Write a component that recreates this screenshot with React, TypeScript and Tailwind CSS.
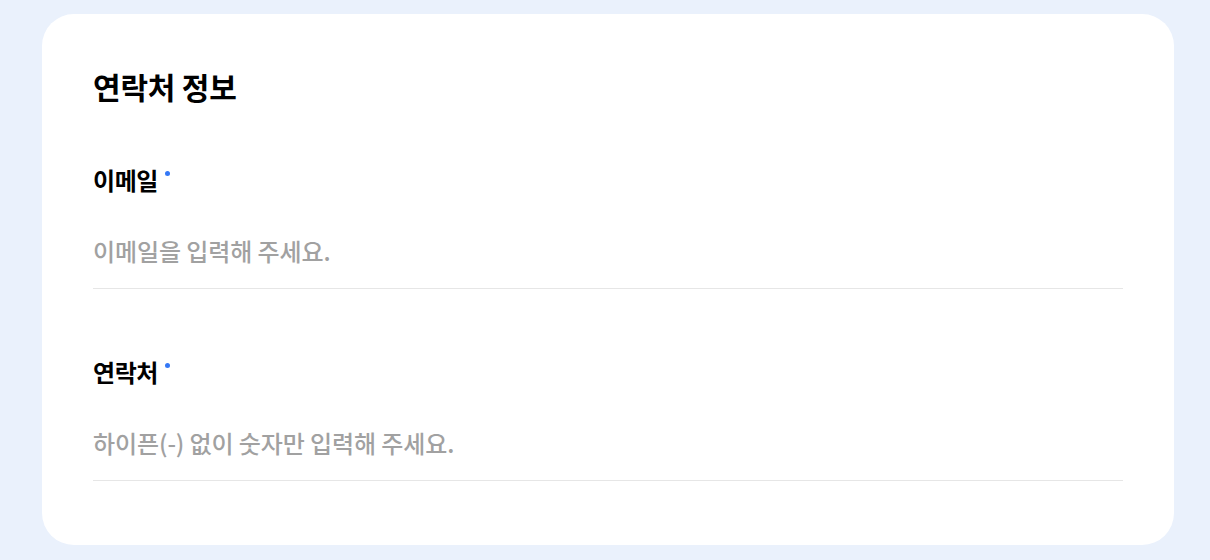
const FONT = { fontFamily: '"Noto Sans CJK KR", "Noto Sans", sans-serif' };

function Field({ label, placeholder, type }: { label: string; placeholder: string; type: string }) {
  return (
    <div className="flex flex-col">
      <label className="flex items-start text-[24px] leading-[28px] font-bold text-black tracking-[-0.4px]">
        {label}
        <span className="ml-[7px] mt-[5px] w-[5px] h-[5px] rounded-full bg-[#3478f6]" />
      </label>
      <input
        type={type}
        placeholder={placeholder}
        className="w-full h-[95px] pt-[41px] pb-[23px] leading-[30px] text-[24px] font-medium tracking-[-0.1px] text-black placeholder:text-[#a1a1a1] border-b border-[#e6e6e6] outline-none bg-transparent"
        style={FONT}
      />
    </div>
  );
}

export default function App() {
  return (
    <div className="w-[1210px] h-[560px] bg-[#eaf1fc] pt-[14px] pl-[42px]" style={FONT}>
      <section className="w-[1132px] h-[531px] bg-white rounded-[32px] pt-[54px] px-[51px]">
        <h2 className="text-[30px] leading-[36px] font-bold text-black tracking-[-0.2px]">연락처 정보</h2>
        <div className="mt-[62px] flex flex-col gap-[69px]">
          <Field label="이메일" placeholder="이메일을 입력해 주세요." type="email" />
          <Field label="연락처" placeholder="하이픈(-) 없이 숫자만 입력해 주세요." type="tel" />
        </div>
      </section>
    </div>
  );
}
